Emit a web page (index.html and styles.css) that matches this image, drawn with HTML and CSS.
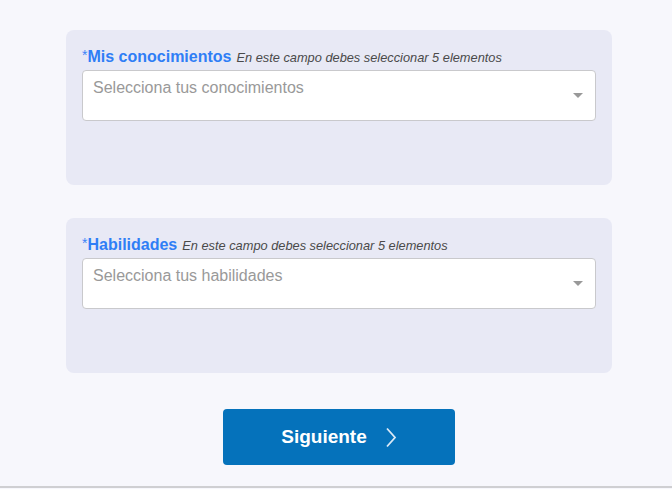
FILE: index.html
```html
<!DOCTYPE html>
<html lang="es">
<head>
<meta charset="utf-8">
<title>Formulario</title>
<link rel="stylesheet" href="styles.css">
</head>
<body>
<main class="page">
  <section class="panel">
    <div class="label-row">
      <span class="req">*</span><span class="label">Mis conocimientos</span>
      <span class="hint">En este campo debes seleccionar 5 elementos</span>
    </div>
    <div class="select">
      <span class="placeholder">Selecciona tus conocimientos</span>
      <span class="caret"></span>
    </div>
  </section>
  <section class="panel">
    <div class="label-row">
      <span class="req">*</span><span class="label">Habilidades</span>
      <span class="hint">En este campo debes seleccionar 5 elementos</span>
    </div>
    <div class="select">
      <span class="placeholder">Selecciona tus habilidades</span>
      <span class="caret"></span>
    </div>
  </section>
  <div class="actions">
    <button class="next" type="button">
      <span>Siguiente</span>
      <svg class="chev" width="12" height="21" viewBox="0 0 12 21"><path d="M2 1.5 L10 10.5 L2 19.5" fill="none" stroke="#dbe9f6" stroke-width="1.8"/></svg>
    </button>
  </div>
</main>
<div class="rule"></div>
</body>
</html>
```
FILE: styles.css
```css
html, body {
  margin: 0;
  padding: 0;
  background: #f7f7fc;
  font-family: "Liberation Sans", Arial, sans-serif;
}
.page {
  width: 546px;
  margin-left: 66px;
  padding-top: 30px;
  display: flex;
  flex-direction: column;
}
.panel {
  background: #e8e9f5;
  border-radius: 8px;
  height: 155px;
  box-sizing: border-box;
  padding: 17px 16px 0 16px;
  margin-bottom: 33px;
}
.panel + .panel {
  margin-bottom: 0;
}
.label-row {
  height: 23px;
  display: flex;
  align-items: baseline;
  white-space: nowrap;
}
.req {
  color: #3d85f7;
  font-size: 14px;
  align-self: flex-start;
  line-height: 14px;
  margin-top: 1px;
}
.label {
  color: #2f7ef6;
  font-weight: bold;
  font-size: 16px;
  line-height: 20px;
}
.hint {
  font-style: italic;
  font-size: 12.8px;
  color: #4a4a4a;
  margin-left: 5px;
}
.select {
  position: relative;
  height: 51px;
  box-sizing: border-box;
  background: #fff;
  border: 1px solid #c9c9cc;
  border-radius: 4px;
  padding: 7px 10px;
}
.placeholder {
  color: #999;
  font-size: 16px;
  line-height: 20px;
}
.caret {
  position: absolute;
  right: 12px;
  top: 22px;
  width: 0;
  height: 0;
  border-left: 5px solid transparent;
  border-right: 5px solid transparent;
  border-top: 5px solid #999;
}
.actions {
  display: flex;
  justify-content: center;
  padding-top: 36px;
}
.next {
  width: 232px;
  height: 56px;
  background: #0572bb;
  border: none;
  border-radius: 4px;
  color: #fff;
  font-family: "Liberation Sans", Arial, sans-serif;
  font-weight: bold;
  font-size: 19px;
  display: flex;
  align-items: center;
  justify-content: center;
  gap: 18px;
  padding: 0;
}
.chev {
  display: block;
}
.rule {
  margin-top: 21px;
  height: 2px;
  background: #cfcfd2;
}
```
